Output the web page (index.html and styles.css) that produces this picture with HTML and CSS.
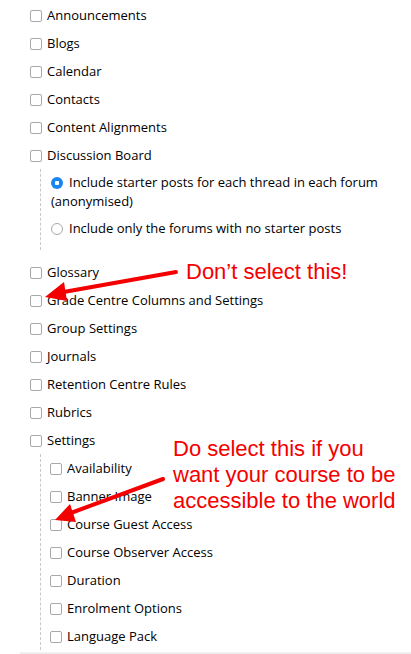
FILE: index.html
```html
<!DOCTYPE html>
<html>
<head>
<meta charset="utf-8">
<link rel="stylesheet" href="styles.css">
</head>
<body>
<div class="page">
  <ul class="list">
    <li class="row"><span class="cb"></span>Announcements</li>
    <li class="row"><span class="cb"></span>Blogs</li>
    <li class="row"><span class="cb"></span>Calendar</li>
    <li class="row"><span class="cb"></span>Contacts</li>
    <li class="row"><span class="cb"></span>Content Alignments</li>
    <li class="row"><span class="cb"></span>Discussion Board</li>
    <li class="sub radios">
      <div class="radio-row"><span class="rb on"></span>Include starter posts for each thread in each forum (anonymised)</div>
      <div class="radio-row"><span class="rb"></span>Include only the forums with no starter posts</div>
    </li>
    <li class="row"><span class="cb"></span>Glossary</li>
    <li class="row"><span class="cb"></span>Grade Centre Columns and Settings</li>
    <li class="row"><span class="cb"></span>Group Settings</li>
    <li class="row"><span class="cb"></span>Journals</li>
    <li class="row"><span class="cb"></span>Retention Centre Rules</li>
    <li class="row"><span class="cb"></span>Rubrics</li>
    <li class="row"><span class="cb"></span>Settings</li>
    <li class="sub checks">
      <div class="row"><span class="cb"></span>Availability</div>
      <div class="row"><span class="cb"></span>Banner Image</div>
      <div class="row"><span class="cb"></span>Course Guest Access</div>
      <div class="row"><span class="cb"></span>Course Observer Access</div>
      <div class="row"><span class="cb"></span>Duration</div>
      <div class="row"><span class="cb"></span>Enrolment Options</div>
      <div class="row"><span class="cb"></span>Language Pack</div>
    </li>
  </ul>
  <div class="footer-shade"></div>

  <div class="note note1">Don’t select this!</div>
  <div class="note note2">Do select this if you<br>want your course to be<br>accessible to the world</div>
  <svg class="arrows" width="411" height="654" viewBox="0 0 411 654">
    <g fill="#f40000" stroke="#f40000">
      <line x1="176" y1="272" x2="58" y2="293" stroke-width="4" stroke-linecap="round"/>
      <polygon points="45,297 64,282 67,301" stroke="none"/>
      <line x1="163" y1="479" x2="68" y2="514" stroke-width="4" stroke-linecap="round"/>
      <polygon points="55,520 70,504 76,522" stroke="none"/>
    </g>
  </svg>
</div>
</body>
</html>
```
FILE: styles.css
```css
html, body {
  margin: 0;
  padding: 0;
  background: #fff;
}
.page {
  position: relative;
  width: 411px;
  height: 654px;
  overflow: hidden;
  font-family: "Open Sans", "DejaVu Sans", sans-serif;
  font-size: 13px;
  color: #000;
}
.list {
  list-style: none;
  margin: 0;
  padding: 1px 0 0 30px;
  height: 651px;
  overflow: hidden;
}
.row {
  display: flex;
  align-items: center;
  height: 28px;
  white-space: nowrap;
}
.cb {
  flex: none;
  box-sizing: border-box;
  width: 12px;
  height: 12px;
  border: 1px solid #a9a9a9;
  border-radius: 2px;
  background: #fff;
  margin-right: 5px;
  margin-top: 1px;
}
.sub {
  margin-left: 10px;
  border-left: 1px dashed #c8c8c8;
}
.radios {
  padding: 4px 0 12px 10px;
  margin-bottom: 8px;
}
.checks {
  padding-left: 9px;
}
.radio-row {
  line-height: 19px;
}
.radio-row + .radio-row {
  margin-top: 8px;
}
.rb {
  display: inline-block;
  box-sizing: border-box;
  width: 12px;
  height: 12px;
  border: 1px solid #a9a9a9;
  border-radius: 50%;
  vertical-align: -2px;
  margin-right: 6px;
  background: #fff;
}
.rb.on {
  border: none;
  background: radial-gradient(circle, #fff 0 2px, #1a84f0 2.5px);
}
.footer-shade {
  height: 3px;
  margin-left: 20px;
  background: linear-gradient(#f3f3f3, #e6e6e6);
}
.note {
  position: absolute;
  font-family: "Liberation Sans", Arial, sans-serif;
  color: #f40000;
  white-space: nowrap;
}
.note1 {
  left: 186px;
  top: 259px;
  font-size: 22px;
  line-height: 26px;
}
.note2 {
  left: 173px;
  top: 436px;
  font-size: 22px;
  line-height: 26px;
}
.arrows {
  position: absolute;
  left: 0;
  top: 0;
  pointer-events: none;
}
```
